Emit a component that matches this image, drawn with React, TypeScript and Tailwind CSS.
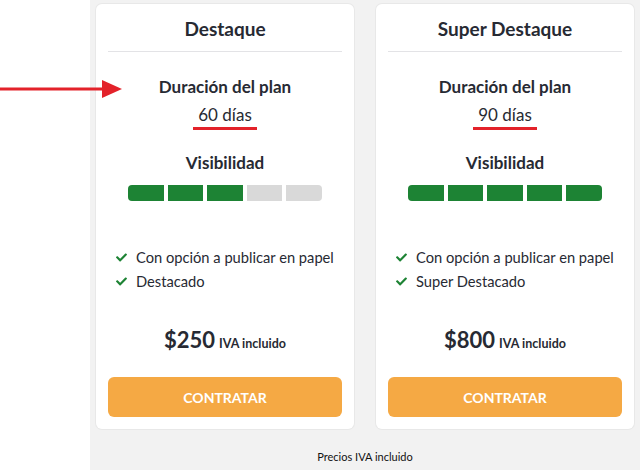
import { FaCheck } from 'react-icons/fa'

type Plan = {
  name: string
  days: number
  level: number
  perks: string[]
  price: string
}

const plans: Plan[] = [
  {
    name: 'Destaque',
    days: 60,
    level: 3,
    perks: ['Con opción a publicar en papel', 'Destacado'],
    price: '$250',
  },
  {
    name: 'Super Destaque',
    days: 90,
    level: 5,
    perks: ['Con opción a publicar en papel', 'Super Destacado'],
    price: '$800',
  },
]

function PlanCard({ plan }: { plan: Plan }) {
  return (
    <div className="w-[258px] bg-white rounded-md shadow-[0_0_0_1px_#e8e8e8] px-3 pb-3 text-[#272a33]">
      <div className="h-[48px] pt-[3px] flex items-center justify-center border-b border-[#e3e3e6]">
        <h2 className="text-[19px] font-bold">{plan.name}</h2>
      </div>

      <div className="mt-[21px] text-center">
        <h3 className="text-[17px] font-bold leading-[28px]">Duración del plan</h3>
        <span className="inline-block mt-[2px] px-[5px] text-[17px] leading-[24px] border-b-[3px] border-[#e3222a]">
          {plan.days} días
        </span>
      </div>

      <div className="mt-[21px] text-center">
        <h3 className="text-[17px] font-bold leading-[24px]">Visibilidad</h3>
        <div className="mt-[10px] flex justify-center gap-[4px]">
          {[0, 1, 2, 3, 4].map((i) => (
            <div
              key={i}
              className={
                'w-[35.6px] h-[16px] ' +
                (i < plan.level ? 'bg-[#1d8334] ' : 'bg-[#d9d9d9] ') +
                (i === 0 ? 'rounded-l-[4px] ' : '') +
                (i === 4 ? 'rounded-r-[4px]' : '')
              }
            />
          ))}
        </div>
      </div>

      <ul className="mt-[44px] pl-2">
        {plan.perks.map((p) => (
          <li key={p} className="flex items-center h-[24px] text-[14.7px]">
            <FaCheck className="w-[11px] h-[11px] text-[#1d8334] mr-[9px]" />
            {p}
          </li>
        ))}
      </ul>

      <div className="mt-[31px] h-[32px] flex items-baseline justify-center gap-[4px]">
        <span className="text-[22px] font-bold leading-[32px]">{plan.price}</span>
        <span className="text-[12.5px] font-bold">IVA incluido</span>
      </div>

      <button
        type="button"
        className="mt-[21px] w-full h-[40px] rounded-md bg-[#f5a944] text-white text-[14px] font-bold"
      >
        CONTRATAR
      </button>
    </div>
  )
}

export default function App() {
  return (
    <div className="relative flex w-[640px] h-[470px] bg-white font-['Lato',sans-serif]">
      <div className="w-[90px]" />
      <div className="flex-1 bg-[#f2f2f2] flex flex-col items-center pt-[4px]">
        <div className="flex gap-[22px]">
          {plans.map((p) => (
            <PlanCard key={p.name} plan={p} />
          ))}
        </div>
        <p className="mt-[20px] text-[11px] leading-[16px] text-[#111]">
          Precios IVA incluido
        </p>
      </div>

      <svg
        className="absolute left-0 top-[78px]"
        width="124"
        height="22"
        viewBox="0 0 124 22"
      >
        <rect x="0" y="9.5" width="104" height="3" fill="#e3222a" />
        <polygon points="102,2 122,11 102,20" fill="#e3222a" />
      </svg>
    </div>
  )
}
